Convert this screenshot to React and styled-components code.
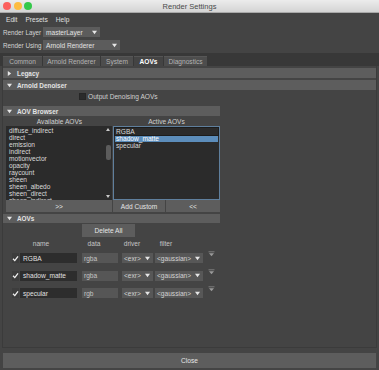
import React from "react";
import styled, { createGlobalStyle } from "styled-components";

const GlobalStyle = createGlobalStyle`
  html, body {
    margin: 0;
    padding: 0;
    background: #444444;
  }
  body {
    font-family: "Liberation Sans", Arial, sans-serif;
    font-size: 6.6px;
    color: #cbcbcb;
  }
  * {
    box-sizing: border-box;
  }
`;

const available = [
  "diffuse_indirect",
  "direct",
  "emission",
  "indirect",
  "motionvector",
  "opacity",
  "raycount",
  "sheen",
  "sheen_albedo",
  "sheen_direct",
  "sheen_indirect",
];

const active = ["RGBA", "shadow_matte", "specular"];

const aovs = [
  { name: "RGBA", data: "rgba" },
  { name: "shadow_matte", data: "rgba" },
  { name: "specular", data: "rgb" },
];

function Arrow({ dir = "down", color = "#e6e6e6", size = 5 }) {
  const pts = dir === "down" ? "0,0 6,0 3,4" : "0,0 4,3 0,6";
  return (
    <svg width={size} height={size} viewBox={dir === "down" ? "0 0 6 4" : "0 0 4 6"}>
      <polygon points={pts} fill={color} />
    </svg>
  );
}

function Check() {
  return (
    <svg width="7" height="7" viewBox="0 0 7 7">
      <polyline points="1,3.8 2.8,5.6 6,1.4" fill="none" stroke="#f2f2f2" strokeWidth="1.3" />
    </svg>
  );
}

function RowMenuIcon() {
  return (
    <svg width="7" height="6" viewBox="0 0 7 6">
      <line x1="0.5" y1="0.8" x2="6.5" y2="0.8" stroke="#8a8a8a" strokeWidth="0.8" />
      <polygon points="1,2.2 6,2.2 3.5,5.2" fill="#9a9a9a" />
    </svg>
  );
}

export default function App() {
  return (
    <>
      <GlobalStyle />
      <Window>
        <TitleBar>
          <Lights>
            <Light color="#fc605c" />
            <Light color="#fdbc40" />
            <Light color="#34c84a" />
          </Lights>
          <Title>Render Settings</Title>
          <span />
        </TitleBar>

        <MenuBar>
          <span>Edit</span>
          <span>Presets</span>
          <span>Help</span>
        </MenuBar>

        <FieldRow mt={2}>
          <FieldLabel>Render Layer</FieldLabel>
          <OptionMenu w={57}>
            <span>masterLayer</span>
            <Arrow />
          </OptionMenu>
        </FieldRow>
        <FieldRow mt={3}>
          <FieldLabel>Render Using</FieldLabel>
          <OptionMenu w={77}>
            <span>Arnold Renderer</span>
            <Arrow />
          </OptionMenu>
        </FieldRow>

        <TabBar>
          <Tab w={39}>Common</Tab>
          <Tab w={57}>Arnold Renderer</Tab>
          <Tab w={32}>System</Tab>
          <Tab w={29} active>
            AOVs
          </Tab>
          <Tab w={43}>Diagnostics</Tab>
        </TabBar>

        <Panel>
          <FrameHeader>
            <Arrow dir="right" />
            Legacy
          </FrameHeader>
          <FrameHeader mt={2}>
            <Arrow />
            Arnold Denoiser
          </FrameHeader>
          <CheckRow>
            <CheckBox />
            <span>Output Denoising AOVs</span>
          </CheckRow>

          <FrameHeader mt={6} w={217}>
            <Arrow />
            AOV Browser
          </FrameHeader>
          <ListLabels>
            <span>Available AOVs</span>
            <span>Active AOVs</span>
          </ListLabels>
          <Lists>
            <AvailableList>
              <Items>
                {available.map((a) => (
                  <Item key={a}>{a}</Item>
                ))}
              </Items>
              <ScrollBar>
                <ScrollArrow up />
                <Track>
                  <Thumb />
                </Track>
                <ScrollArrow />
              </ScrollBar>
            </AvailableList>
            <ActiveList>
              {active.map((a) => (
                <Item key={a} selected={a === "shadow_matte"} focus={a === "RGBA"}>
                  {a}
                </Item>
              ))}
            </ActiveList>
          </Lists>
          <ButtonRow>
            <Button>&gt;&gt;</Button>
            <Button>Add Custom</Button>
            <Button>&lt;&lt;</Button>
          </ButtonRow>

          <FrameHeader mt={2} w={217} h={9}>
            <Arrow />
            AOVs
          </FrameHeader>
          <DeleteRow>
            <Button h={13} w={53}>
              Delete All
            </Button>
          </DeleteRow>
          <HeaderRow>
            <HeaderCell w={76}>name</HeaderCell>
            <HeaderCell w={30}>data</HeaderCell>
            <HeaderCell w={46}>driver</HeaderCell>
            <HeaderCell w={22}>filter</HeaderCell>
          </HeaderRow>
          <AovRows>
            {aovs.map((a) => (
              <AovRow key={a.name}>
                <RowCheck>
                  <Check />
                </RowCheck>
                <NameField>{a.name}</NameField>
                <DataField>{a.data}</DataField>
                <RowMenu w={31} ml={4}>
                  <span>&lt;exr&gt;</span>
                  <Arrow />
                </RowMenu>
                <RowMenu w={48} ml={2}>
                  <span>&lt;gaussian&gt;</span>
                  <Arrow />
                </RowMenu>
                <IconSlot>
                  <RowMenuIcon />
                </IconSlot>
              </AovRow>
            ))}
          </AovRows>
        </Panel>

        <Footer>
          <Button h={15}>Close</Button>
        </Footer>
      </Window>
    </>
  );
}

const Window = styled.div`
  width: 379px;
  height: 370px;
  display: flex;
  flex-direction: column;
  overflow: hidden;
  background: #444444;
`;

const TitleBar = styled.div`
  height: 13px;
  flex: none;
  display: grid;
  grid-template-columns: 1fr auto 1fr;
  align-items: center;
  background: linear-gradient(#ececec, #d4d4d4);
  border-bottom: 1px solid #a9a9a9;
`;

const Lights = styled.div`
  display: flex;
  gap: 2.5px;
  padding-left: 3px;
`;

const Light = styled.span`
  width: 8px;
  height: 8px;
  border-radius: 50%;
  background: ${(p) => p.color};
`;

const Title = styled.div`
  font-size: 7.5px;
  color: #4a4a4a;
`;

const MenuBar = styled.div`
  height: 12px;
  flex: none;
  display: flex;
  align-items: center;
  gap: 8px;
  padding: 1px 0 0 6px;
  color: #e0e0e0;
`;

const FieldRow = styled.div`
  height: 10px;
  flex: none;
  margin-top: ${(p) => p.mt}px;
  display: flex;
  align-items: center;
  padding-left: 3px;
  color: #d4d4d4;
`;

const FieldLabel = styled.span`
  width: 40px;
  flex: none;
  white-space: nowrap;
  font-size: 6.3px;
`;

const OptionMenu = styled.div`
  width: ${(p) => p.w}px;
  height: 100%;
  flex: none;
  display: flex;
  align-items: center;
  justify-content: space-between;
  padding: 0 3px;
  background: #5c5c5c;
  color: #e2e2e2;
  white-space: nowrap;
`;

const TabBar = styled.div`
  height: 13px;
  flex: none;
  margin-top: 3px;
  display: flex;
  align-items: flex-end;
  gap: 1px;
  padding-left: 3px;
  background: #383838;
`;

const Tab = styled.div`
  width: ${(p) => p.w}px;
  height: 10px;
  display: flex;
  align-items: center;
  justify-content: center;
  white-space: nowrap;
  background: ${(p) => (p.active ? "#444444" : "#4d4d4d")};
  color: ${(p) => (p.active ? "#ffffff" : "#b4b4b4")};
  font-weight: ${(p) => (p.active ? "bold" : "normal")};
  border-top: 1px solid ${(p) => (p.active ? "#555" : "#575757")};
`;

const Panel = styled.div`
  flex: 1;
  margin: 0 2px;
  padding-top: 2px;
  border: 1px solid #3b3b3b;
  border-top: none;
  display: flex;
  flex-direction: column;
`;

const FrameHeader = styled.div`
  width: ${(p) => (p.w ? `${p.w}px` : "auto")};
  height: ${(p) => p.h || 10}px;
  flex: none;
  margin-top: ${(p) => p.mt || 0}px;
  display: flex;
  align-items: center;
  gap: 5px;
  padding-left: 4px;
  background: #5d5d5d;
  color: #e4e4e4;
  font-weight: bold;
  font-size: 6.4px;
`;

const CheckRow = styled.div`
  height: 8px;
  margin-top: 2px;
  display: flex;
  align-items: center;
  gap: 2px;
  padding-left: 76px;
  color: #d0d0d0;
`;

const CheckBox = styled.span`
  width: 7px;
  height: 7px;
  background: #2b2b2b;
  border: 1px solid #262626;
`;

const ListLabels = styled.div`
  height: 9px;
  display: grid;
  grid-template-columns: 107px 107px;
  align-items: end;
  padding-left: 3px;
  text-align: center;
  color: #d0d0d0;
`;

const Lists = styled.div`
  height: 74px;
  margin-top: 1px;
  display: grid;
  grid-template-columns: 106px 107px;
  gap: 1px;
  padding-left: 3px;
`;

const AvailableList = styled.div`
  display: flex;
  background: #2b2b2b;
  overflow: hidden;
`;

const Items = styled.div`
  flex: 1;
  padding: 1px 2px;
  overflow: hidden;
`;

const Item = styled.div`
  height: 7px;
  line-height: 7px;
  padding-left: 1px;
  white-space: nowrap;
  color: ${(p) => (p.selected ? "#ffffff" : "#dadada")};
  background: ${(p) => (p.selected ? "#5c8dbb" : "transparent")};
  outline: ${(p) => (p.focus ? "1px solid #1c1c1c" : "none")};
`;

const ScrollBar = styled.div`
  width: 8px;
  display: flex;
  flex-direction: column;
  align-items: center;
  padding: 2px 0;
`;

const ScrollArrow = styled.span`
  width: 0;
  height: 0;
  border-left: 2.5px solid transparent;
  border-right: 2.5px solid transparent;
  border-${(p) => (p.up ? "bottom" : "top")}: 3px solid #c9c9c9;
`;

const Track = styled.div`
  flex: 1;
  width: 100%;
  display: flex;
  justify-content: center;
  padding-top: 14px;
`;

const Thumb = styled.div`
  width: 5px;
  height: 15px;
  border-radius: 2px;
  background: #5c5c5c;
`;

const ActiveList = styled.div`
  background: #2b2b2b;
  border: 1px solid #5f7f9d;
  padding: 1px 1px;
  overflow: hidden;
`;

const ButtonRow = styled.div`
  height: 12px;
  display: grid;
  grid-template-columns: 106px 52px 54px;
  gap: 1px;
  padding-left: 3px;
`;

const Button = styled.div`
  width: ${(p) => (p.w ? `${p.w}px` : "auto")};
  height: ${(p) => (p.h ? `${p.h}px` : "100%")};
  display: flex;
  align-items: center;
  justify-content: center;
  background: #5d5d5d;
  color: #e6e6e6;
`;

const DeleteRow = styled.div`
  margin-top: 1px;
  padding-left: 79px;
  display: flex;
`;

const HeaderRow = styled.div`
  height: 8px;
  margin-top: 2px;
  display: flex;
  align-items: center;
  color: #c4c4c4;
`;

const HeaderCell = styled.span`
  width: ${(p) => p.w}px;
  text-align: center;
`;

const AovRows = styled.div`
  margin-top: 6px;
  display: flex;
  flex-direction: column;
  gap: 7.5px;
`;

const AovRow = styled.div`
  height: 10px;
  display: flex;
  align-items: stretch;
  padding-left: 9px;
`;

const RowCheck = styled.span`
  width: 7px;
  display: flex;
  align-items: center;
  justify-content: center;
  background: #3d3d3d;
`;

const NameField = styled.div`
  width: 57px;
  margin-left: 1px;
  display: flex;
  align-items: center;
  padding-left: 3px;
  background: #2d2d2d;
  color: #e0e0e0;
`;

const DataField = styled.div`
  width: 36px;
  margin-left: 5px;
  display: flex;
  align-items: center;
  padding-left: 2px;
  background: #565656;
  color: #c4c4c4;
`;

const RowMenu = styled.div`
  width: ${(p) => p.w}px;
  margin-left: ${(p) => p.ml}px;
  display: flex;
  align-items: center;
  justify-content: space-between;
  padding: 0 3px 0 2px;
  background: #575757;
  color: #d2d2d2;
  white-space: nowrap;
  overflow: hidden;
`;

const IconSlot = styled.span`
  margin-left: 5px;
  display: flex;
  align-items: flex-start;
  margin-top: -2px;
`;

const Footer = styled.div`
  height: 22px;
  flex: none;
  padding: 5px 3px 2px;
  display: flex;
  flex-direction: column;
`;
